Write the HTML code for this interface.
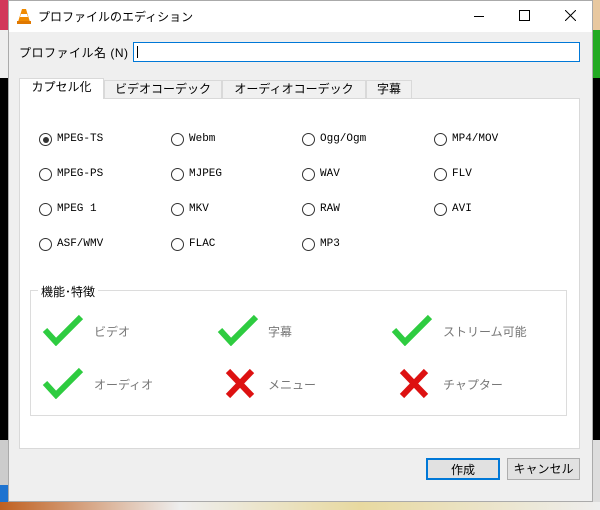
<!DOCTYPE html>
<html><head><meta charset="utf-8"><style>
*{margin:0;padding:0;box-sizing:border-box}
body{width:600px;height:510px;position:relative;overflow:hidden;background:#000;font-family:"Liberation Sans","Noto Sans CJK JP",sans-serif;font-size:12px;color:#000}
.a{position:absolute}
.win{left:8px;top:0;width:585px;height:502px;background:#efefef;border:1px solid #aaa}
.title{left:0;top:0;width:583px;height:31px;background:#fff}
.mono{font-family:"Liberation Mono","Noto Sans CJK JP",monospace;font-size:11px}
.rad{width:13px;height:13px;border:1px solid #333;border-radius:50%;background:#fff}
.tab{top:80px;height:19px;border:1px solid #d9d9d9;background:#f0f0f0;text-align:center;line-height:17px;font-size:12px;white-space:nowrap}
.lbl{color:#777;font-size:12px}
.btn{height:22px;border:1px solid #adadad;background:#e1e1e1;text-align:center;line-height:20px}
</style></head><body>
<div class="a" style="left:0;top:0;width:8px;height:30px;background:#d2385a"></div>
<div class="a" style="left:0;top:30px;width:8px;height:48px;background:#eee"></div>
<div class="a" style="left:0;top:440px;width:8px;height:70px;background:#ccc"></div>
<div class="a" style="left:0;top:485px;width:8px;height:25px;background:#1e73d0"></div>
<div class="a" style="left:593px;top:0;width:7px;height:30px;background:#e8c8a0"></div>
<div class="a" style="left:593px;top:30px;width:7px;height:48px;background:#2a2"></div>
<div class="a" style="left:593px;top:440px;width:7px;height:70px;background:#ddd"></div>
<div class="a" style="left:0;top:502px;width:600px;height:8px;background:linear-gradient(90deg,#c06020,#eee 30%,#e8d9a0 60%,#eee)"></div>
<div class="a win">
 <div class="a title">
  <svg class="a" style="left:8px;top:7px" width="14" height="16" viewBox="0 0 14 16"><path d="M5 1h4l4 13H1z" fill="#f08a00"/><path d="M4 6h6l1 3H3z" fill="#fff"/><rect x="0" y="13" width="14" height="3" fill="#e07800"/></svg>
  <div class="a" style="left:29px;top:7px;font-size:12px">プロファイルのエディション</div>
  <div class="a" style="left:465px;top:15px;width:10px;height:1px;background:#000"></div>
  <div class="a" style="left:510px;top:9px;width:11px;height:11px;border:1px solid #000"></div>
  <svg class="a" style="left:556px;top:9px" width="11" height="11"><path d="M0 0L11 11M11 0L0 11" stroke="#000" stroke-width="1"/></svg>
 </div>
</div>
<div class="a" style="left:19px;top:44px;font-size:12px;letter-spacing:0.5px;white-space:nowrap">プロファイル名 (N)</div>
<div class="a" style="left:133px;top:42px;width:447px;height:20px;background:#fff;border:1px solid #0078d7"><div class="a" style="left:3px;top:3px;width:1px;height:12px;background:#000"></div></div>
<div class="a" style="left:19px;top:98px;width:561px;height:351px;background:#fff;border:1px solid #d9d9d9"></div>
<div class="a tab" style="left:19px;top:78px;width:85px;height:21px;background:#fff;border-bottom:none">カプセル化</div>
<div class="a tab" style="left:104px;width:118px">ビデオコーデック</div>
<div class="a tab" style="left:222px;width:144px">オーディオコーデック</div>
<div class="a tab" style="left:366px;width:46px">字幕</div>
<div id="r"></div>
<div class="a" style="left:30px;top:290px;width:537px;height:126px;border:1px solid #dcdcdc"></div>
<div class="a" style="left:38px;top:283px;background:#fff;padding:0 3px;font-size:12px">機能･特徴</div>
<script>
var cols=[39,171,302,434],rows=[133,168,203,238];
var t=[["MPEG-TS","Webm","Ogg/Ogm","MP4/MOV"],["MPEG-PS","MJPEG","WAV","FLV"],["MPEG 1","MKV","RAW","AVI"],["ASF/WMV","FLAC","MP3",""]];
var h="";
for(var i=0;i<4;i++)for(var j=0;j<4;j++){if(!t[i][j])continue;
h+='<div class="a rad" style="left:'+cols[j]+'px;top:'+rows[i]+'px">'+(i==0&&j==0?'<div class="a" style="left:2.5px;top:2.5px;width:6px;height:6px;border-radius:50%;background:#333"></div>':'')+'</div>';
h+='<div class="a mono" style="left:'+(cols[j]+18)+'px;top:'+(rows[i]+0)+'px">'+t[i][j]+'</div>';}
var ck='<svg width="42" height="32" viewBox="0 0 42 32"><path d="M3 16L14 28L39 3" fill="none" stroke="#2ecc40" stroke-width="6"/></svg>';
var cx='<svg width="30" height="31" viewBox="0 0 30 31"><path d="M3 3L27 28M27 3L3 28" stroke="#dd1111" stroke-width="6"/></svg>';
var f=[[42,314,ck,94,"ビデオ",0],[217,314,ck,268,"字幕",0],[391,314,ck,443,"ストリーム可能",0],[42,367,ck,94,"オーディオ",0],[225,368,cx,268,"メニュー",1],[399,368,cx,443,"チャプター",1]];
f.forEach(function(a){h+='<div class="a" style="left:'+a[0]+'px;top:'+a[1]+'px">'+a[2]+'</div><div class="a lbl" style="left:'+a[3]+'px;top:'+(a[1]+9-a[5])+'px">'+a[4]+'</div>';});
document.getElementById('r').innerHTML=h;
</script>
<div class="a btn" style="left:426px;top:458px;width:74px;border:2px solid #0078d7">作成</div>
<div class="a btn" style="left:507px;top:458px;width:73px">キャンセル</div>
</body></html>
